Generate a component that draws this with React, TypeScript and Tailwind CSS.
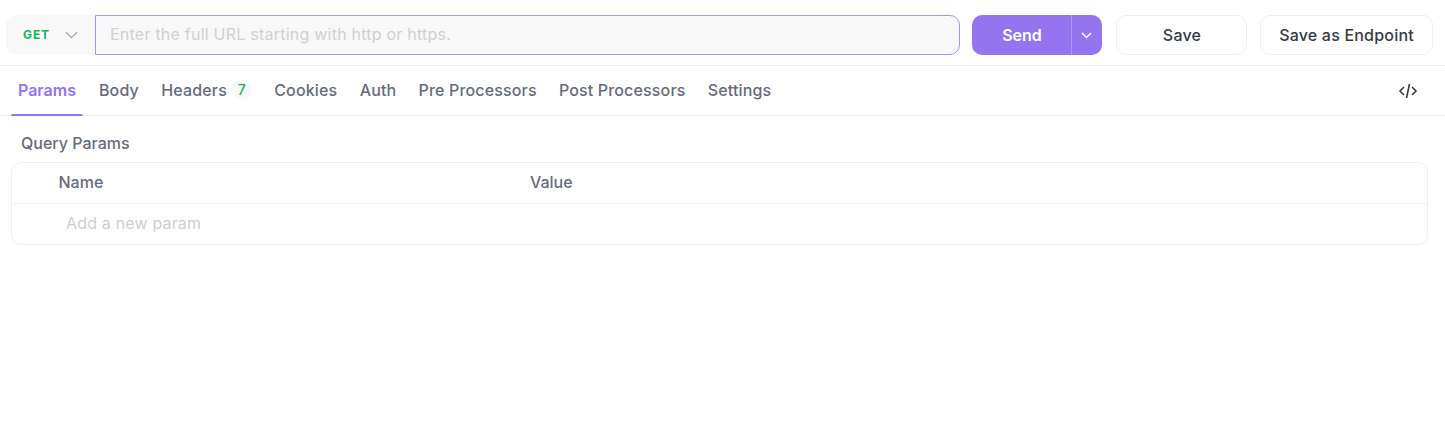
import React from "react";

const tabs = ["Params", "Body", "Headers", "Cookies", "Auth", "Pre Processors", "Post Processors", "Settings"];

export default function App() {
  return (
    <div className="w-[1445px] h-[433px] bg-white font-['Inter',sans-serif] overflow-hidden">
      <div className="h-[66px] flex items-start pt-[15px] pl-[6px] pr-[12px] border-b border-[#f0f0f0]">
        <div className="flex flex-1 h-10">
          <div className="w-[89px] h-10 flex items-center bg-[#f8f8f8] rounded-l-[10px] pl-[17px]">
            <span className="text-[12px] font-bold tracking-[0.9px] text-[#17b26a]">GET</span>
            <svg className="ml-[15px]" width="13" height="8" viewBox="0 0 13 8" fill="none" stroke="#a9a9a9" strokeWidth="1.3">
              <path d="M1 1.2l5.5 5.5L12 1.2" />
            </svg>
          </div>
          <div className="flex-1 h-10 flex items-center bg-[#f8f8f8] border border-[#a88ff0] rounded-r-[10px] pl-[14px] pb-[2px]">
            <span className="text-[16px] tracking-[0.23px] text-[#d0d0d0]">Enter the full URL starting with http or https.</span>
          </div>
        </div>
        <div className="ml-3 w-[130px] h-10 flex bg-[#9575ef] rounded-[10px] text-white">
          <div className="w-[100px] flex items-center justify-center pb-px pl-px text-[16px] font-semibold border-r border-[#b19bf4]">Send</div>
          <div className="flex-1 flex items-center justify-center pr-[2px]">
            <svg width="11" height="7" viewBox="0 0 11 7" fill="none" stroke="#fff" strokeWidth="1.5">
              <path d="M1 1l4.5 4.5L10 1" />
            </svg>
          </div>
        </div>
        <div className="ml-[14px] w-[131px] h-10 flex items-center justify-center pb-px pl-px border border-[#efefef] rounded-[10px] text-[16px] tracking-[0.2px] font-medium text-[#353a47]">Save</div>
        <div className="ml-[13px] w-[173px] h-10 flex items-center justify-center pb-px border border-[#efefef] rounded-[10px] text-[16px] tracking-[0.2px] font-medium text-[#353a47]">Save as Endpoint</div>
      </div>
      <div className="h-[50px] flex items-center pl-[11px] pr-[27px] border-b border-[#f0f0f0]">
        {tabs.map((t) => (
          <div
            key={t}
            className={
              "relative h-full flex items-center px-[7px] pb-[2px] text-[16px] " +
              (t === "Params"
                ? "mr-[9px] font-semibold text-[#9373ee]"
                : "mr-[8.3px] tracking-[0.15px] font-medium text-[#666b7a]")
            }
          >
            {t}
            {t === "Params" && <div className="absolute left-0 right-0 bottom-[-1px] h-[2px] rounded-t bg-[#9575ef]" />}
            {t === "Headers" && (
              <span className="ml-[5px] w-5 h-5 rounded-full bg-[#f8f8f8] flex items-center justify-center text-[14px] text-[#17b26a]">7</span>
            )}
          </div>
        ))}
        <svg className="ml-auto" width="20" height="20" viewBox="0 0 20 20" fill="none" stroke="#353a47" strokeWidth="1.6">
          <path d="M6 6l-4 4 4 4M14 6l4 4-4 4M11.5 3L8.5 17" />
        </svg>
      </div>
      <div className="pl-[11px] pr-[17px]">
        <div className="pl-[10px] pt-[17px] h-[46px] text-[16px] leading-[20px] font-medium text-[#666b7a]">Query Params</div>
        <div className="border border-[#f0f0f0] rounded-[10px]">
          <div className="h-[41px] flex items-center pb-[2px] border-b border-[#f2f2f2] text-[16px] font-medium text-[#666b7a]">
            <div className="w-[518px] pl-[46.5px]">Name</div>
            <div>Value</div>
          </div>
          <div className="h-[40px] flex items-center pb-[2px] pl-[54px] text-[16px] tracking-[0.17px] text-[#d0cdd0]">Add a new param</div>
        </div>
      </div>
    </div>
  );
}
